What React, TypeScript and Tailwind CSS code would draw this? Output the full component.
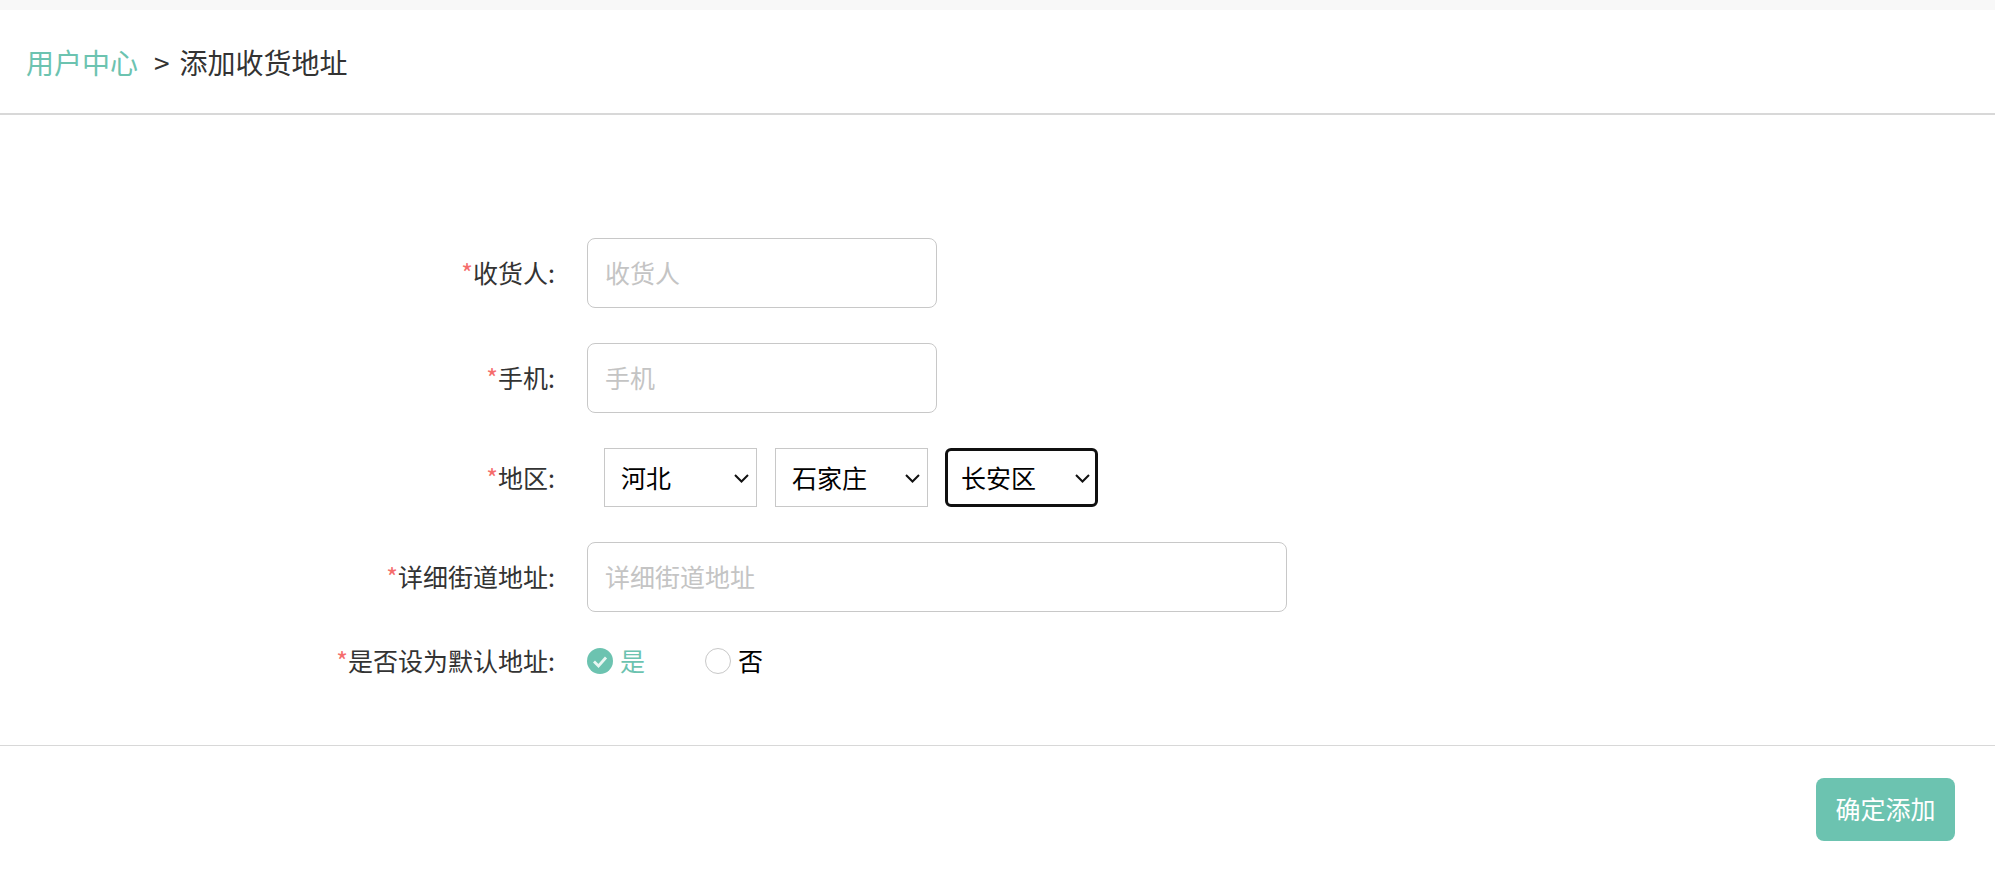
import React from 'react'

const font = '[font-family:"Noto_Sans_CJK_SC","Liberation_Sans",sans-serif]'

function Label({ text }: { text: string }) {
    return (
        <label className="mb-[2px] w-[563px] shrink-0 pr-[8px] text-right text-[25px] leading-[32px] text-[#333]">
            <span className="text-[#f56c6c]">*</span>
            {text}:
        </label>
    )
}

function Select({ value, options, focused }: { value: string; options: string[]; focused?: boolean }) {
    return (
        <div className="relative h-[59px] w-[153px]">
            <select
                defaultValue={value}
                className={
                    focused
                        ? 'h-full w-full appearance-none rounded-[6px] border-[3px] border-[#101010] bg-white pl-[13px] text-[25px] text-black'
                        : 'h-full w-full appearance-none border border-[#c8c8c8] bg-white pl-[16px] text-[25px] text-black'
                }
            >
                {options.map((o) => (
                    <option key={o}>{o}</option>
                ))}
            </select>
            <svg className="pointer-events-none absolute top-[26px] right-[8px]" width="15" height="9" viewBox="0 0 15 9">
                <path d="M1 1l6.5 6.5L14 1" fill="none" stroke="#111" strokeWidth="2" />
            </svg>
        </div>
    )
}

export default function App() {
    return (
        <div className={`${font} h-[876px] overflow-hidden bg-white`}>
            <div className="h-[10px] bg-[#f8f8f8]"></div>
            <div className="flex h-[105px] items-center border-b-2 border-[#d8d8d8] pl-[26px] text-[28px] text-[#333]">
                <a className="text-[#6cc3b0]">用户中心</a>
                <span className="ml-[16px]">&gt;</span>
                <span className="ml-[10px]">添加收货地址</span>
            </div>

            <form className="flex flex-col pt-[123px]">
                <div className="flex h-[70px] items-center">
                    <Label text="收货人" />
                    <input
                        placeholder="收货人"
                        className="ml-[24px] h-[70px] w-[350px] rounded-[8px] border border-[#c8c8c8] px-[17px] pb-[2px] text-[25px] placeholder:text-[#c4c4c4]"
                    />
                </div>
                <div className="mt-[35px] flex h-[70px] items-center">
                    <Label text="手机" />
                    <input
                        placeholder="手机"
                        className="ml-[24px] h-[70px] w-[350px] rounded-[8px] border border-[#c8c8c8] px-[17px] pb-[2px] text-[25px] placeholder:text-[#c4c4c4]"
                    />
                </div>
                <div className="mt-[35px] flex h-[59px] items-center">
                    <Label text="地区" />
                    <div className="ml-[41px] flex gap-[18px]">
                        <Select value="河北" options={['河北']} />
                        <Select value="石家庄" options={['石家庄']} />
                        <div className="-ml-[1px]">
                            <Select value="长安区" options={['长安区']} focused />
                        </div>
                    </div>
                </div>
                <div className="mt-[35px] flex h-[70px] items-center">
                    <Label text="详细街道地址" />
                    <input
                        placeholder="详细街道地址"
                        className="ml-[24px] h-[70px] w-[700px] rounded-[8px] border border-[#c8c8c8] px-[17px] pb-[2px] text-[25px] placeholder:text-[#c4c4c4]"
                    />
                </div>
                <div className="mt-[19px] flex h-[60px] items-center">
                    <Label text="是否设为默认地址" />
                    <div className="ml-[24px] flex items-center text-[25px]">
                        <svg width="26" height="26" viewBox="0 0 26 26">
                            <circle cx="13" cy="13" r="13" fill="#6cc3b0" />
                            <path d="M7 13.5l4.5 4.5L19 9.5" fill="none" stroke="#e8f6f2" strokeWidth="2.8" />
                        </svg>
                        <span className="ml-[7px] text-[#6cc3b0]">是</span>
                        <span className="ml-[60px] h-[26px] w-[26px] rounded-full border border-[#c8c8c8]"></span>
                        <span className="ml-[7px] text-black">否</span>
                    </div>
                </div>
            </form>

            <div className="mt-[54px] flex justify-end border-t border-[#d8d8d8] pt-[32px] pr-[40px]">
                <button className="h-[63px] w-[139px] rounded-[8px] bg-[#6cc3b0] pb-[2px] text-[25px] text-white">确定添加</button>
            </div>
        </div>
    )
}
